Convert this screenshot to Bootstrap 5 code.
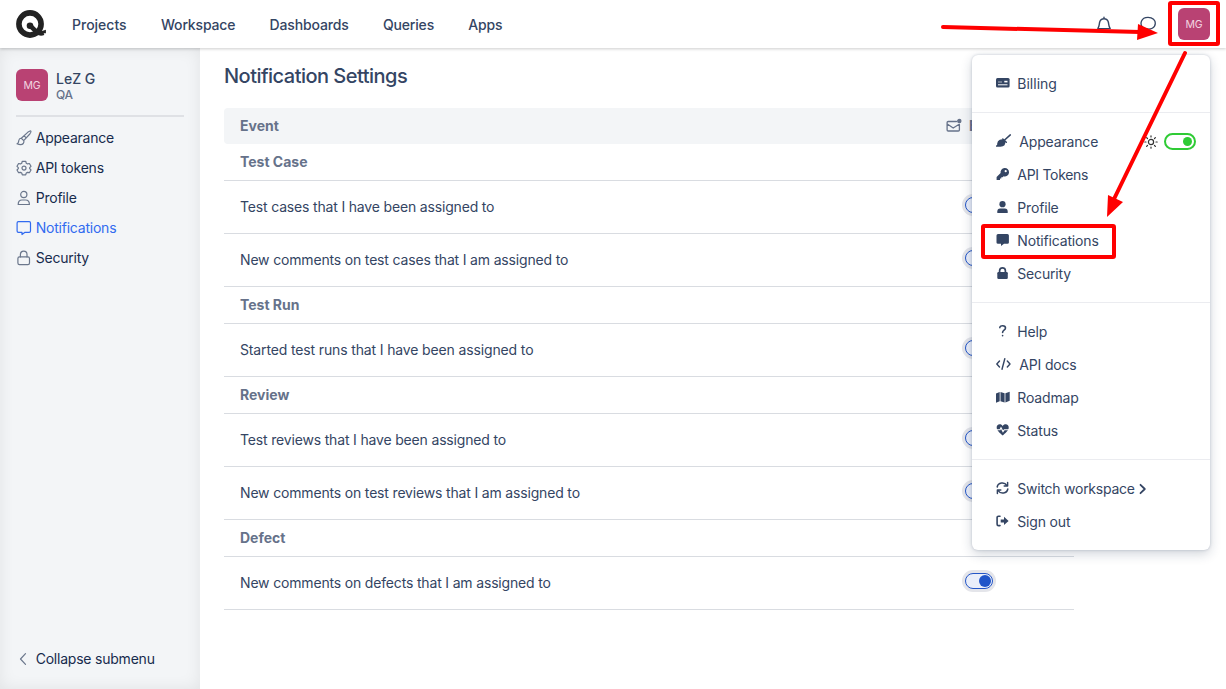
<!DOCTYPE html>
<html lang="en">
<head>
<meta charset="utf-8">
<meta name="viewport" content="width=device-width, initial-scale=1">
<title>Notification Settings</title>
<link href="https://cdn.jsdelivr.net/npm/bootstrap@5.3.0/dist/css/bootstrap.min.css" rel="stylesheet">
<style>
body{font:14px/20px Inter,"Liberation Sans",sans-serif;letter-spacing:-.17px;color:#344563;height:689px;overflow:hidden;background:#fff}
svg{display:block;flex:none;overflow:visible}
.topbar{height:48px;box-shadow:0 1px 3px rgba(0,0,0,.2);z-index:3;background:#fff;padding-left:16px;padding-right:16px}
.topbar .nav-link{color:#344563;font-weight:500;padding:1px 0 0;margin-right:34.3px;letter-spacing:-.16px}
.topbar .nav-link:first-child{letter-spacing:0}
.pic{width:32px;height:32px;border-radius:6px;background:#b94273;color:#f3d6e1;font-size:10.5px;padding-top:1px}
.side{width:200px;background:#f3f5f7;box-shadow:inset 0 0 16px rgba(0,0,0,.075);padding:21px 16px 0}
.side .who{height:32px;line-height:16px}
.side .split{height:2px;background:#dfe1e5;margin:14px 0 6px}
.side a{height:30px;color:#172b4d;text-decoration:none;letter-spacing:-.22px}
.side a svg{width:16px;height:16px;margin-right:3.7px;color:#6b778c;stroke-width:1.2}
.side a.now,.side a.now svg{color:#316bf0}
.ln{fill:none;stroke:currentColor;stroke-linecap:round;stroke-linejoin:round}
.content{padding:16px 24px}
h1{font-size:20px;line-height:24px;font-weight:500;margin:0 0 20px;letter-spacing:-.52px}
.grid{width:850px}
.rowline{border-bottom:1px solid #d9dce1;padding:0 16px;height:53px}
.rowline.group{height:37px;font-weight:700;letter-spacing:0;color:#66728a}
.rowline.head{height:36px;border:0;background:#f3f5f7;border-radius:4px;letter-spacing:0}
.tog{width:28px;height:16px;border:1px solid #2456c7;border-radius:8px;background:#e9eefa;box-shadow:0 0 0 3px #e4e5ea;margin-right:65px;margin-top:-4px;padding:0 1px}
.tog i{width:12px;height:12px;border-radius:50%;background:#2055c9}
.usermenu{position:absolute;left:972px;top:55px;width:238px;background:#fff;border-radius:6px;box-shadow:0 4px 12px rgba(23,43,77,.2),0 0 3px rgba(23,43,77,.22);z-index:4}
.usermenu section{padding:12px 14px 12px 24px;border-bottom:1px solid #ebecf0}
.usermenu section:last-child{border:0}
.usermenu .it{height:33px}
.usermenu .it>svg:first-child{width:14px;height:14px;margin:0 7.3px 2px 0}
.green{width:32px;height:17px;border:2px solid #2fcb35;border-radius:9px;padding-right:2px}
.green i{width:9px;height:9px;border-radius:50%;background:#2fcb35}
.marks{position:absolute;left:0;top:0;z-index:6}
</style>
</head>
<body class="d-flex flex-column position-relative">
<header class="topbar d-flex align-items-center position-relative flex-shrink-0">
  <svg width="29" height="30" viewBox="0 0 29 30" style="margin-right:27px"><circle cx="14" cy="15" r="11.1" fill="none" stroke="#222" stroke-width="5.6"/><circle cx="14" cy="16.7" r="3.3" fill="#222"/><path d="M14.5 17L20 22.3Q23.5 25.3 27.6 23.9V24.2" fill="none" stroke="#222" stroke-width="4.6"/></svg>
  <nav class="nav">
    <a class="nav-link" href="#">Projects</a><a class="nav-link" href="#">Workspace</a><a class="nav-link" href="#">Dashboards</a><a class="nav-link" href="#">Queries</a><a class="nav-link" href="#">Apps</a>
  </nav>
  <div class="ms-auto d-flex align-items-center">
    <svg class="ln" width="16" height="16" viewBox="0 0 16 16" style="margin-right:28px" stroke-width="1.4"><path d="M8 1.2V2.6M1.8 12.6C3.5 10.2 3 8.7 3.7 6C4.3 3.6 6 2.7 8 2.7S11.7 3.6 12.3 6C13 8.7 12.5 10.2 14.2 12.6ZM6.3 14.8Q8 16.3 9.7 14.8"/></svg>
    <svg class="ln" width="16" height="16" viewBox="0 0 16 16" style="margin-right:22px" stroke-width="1.3"><path d="M3.2 11.8C-.9 8.3 1 1.4 8 1.4C13 1.4 15.3 4.3 15.3 7.3C15.3 12 10.5 14 5.7 12.7L1.5 14Z"/></svg>
    <div class="pic d-flex align-items-center justify-content-center">MG</div>
  </div>
</header>
<div class="d-flex flex-grow-1">
  <aside class="side d-flex flex-column flex-shrink-0">
    <div class="who d-flex"><div class="pic d-flex align-items-center justify-content-center me-2">MG</div><div style="padding-top:2px"><div style="font-weight:500;letter-spacing:0">LeZ G</div><div style="font-size:12px;color:#66728a;font-weight:500">QA</div></div></div>
    <div class="split"></div>
    <a class="d-flex align-items-center" href="#"><svg class="ln" viewBox="0 0 16 16"><path d="M5.3 8.3L12 2.1Q14.5.4 14.9 1Q15.5 1.7 13.8 4L7.7 10.6M5.3 8.3Q3.2 8 2.8 10.5Q2.5 13.5 1 13.8Q5.4 15.6 7.3 13.5Q8.4 12 7.7 10.6ZM8.2 5.8L10.2 7.8"/></svg>Appearance</a>
    <a class="d-flex align-items-center" href="#"><svg class="ln" viewBox="0 0 16 16"><path d="M6.3 1.3H9.7L10.3 3.2L11.5 3.9L13.4 3.5L15 6.3L13.7 7.7V8.7L15 10L13.4 12.7L11.5 12.3L10.3 13L9.7 14.8H6.3L5.7 13L4.5 12.3L2.6 12.7L1 10L2.3 8.7V7.7L1 6.3L2.6 3.5L4.5 3.9L5.7 3.2Z"/><circle cx="8" cy="8.1" r="2"/></svg>API tokens</a>
    <a class="d-flex align-items-center" href="#"><svg class="ln" viewBox="0 0 16 16"><circle cx="7.8" cy="4.5" r="3.1"/><path d="M2.2 14.5C2.2 11.5 4 10 6 10H9.6C11.6 10 13.4 11.5 13.4 14.5Z"/></svg>Profile</a>
    <a class="now d-flex align-items-center" href="#"><svg class="ln" viewBox="0 0 16 16"><path d="M2.4 1.7H13.2Q14.5 1.7 14.5 3V11Q14.5 12.3 13.2 12.3H9L6 14.5V12.3H2.4Q1.1 12.3 1.1 11V3Q1.1 1.7 2.4 1.7Z"/></svg>Notifications</a>
    <a class="d-flex align-items-center" href="#"><svg class="ln" viewBox="0 0 16 16"><rect x="1.9" y="6.9" width="11.6" height="7.7" rx="1.6"/><path d="M4.4 6.9V4.5C4.4 0 11 0 11 4.5V6.9"/></svg>Security</a>
    <a class="d-flex align-items-center mt-auto" style="margin-bottom:15px" href="#"><svg class="ln" viewBox="0 0 16 16"><path d="M9.5 2.7L4.5 8L9.5 13.3"/></svg>Collapse submenu</a>
  </aside>
  <main class="content flex-grow-1">
    <h1>Notification Settings</h1>
    <div class="grid">
      <div class="rowline head d-flex align-items-center fw-bold" style="color:#66728a"><span>Event</span><svg class="ln ms-auto" width="16" height="14" viewBox="0 0 16 14" style="margin-right:7px" stroke-width="1.3"><path d="M10.5 2.5H2.2Q1.1 2.5 1.1 3.6V10.9Q1.1 12 2.2 12H12.3Q13.4 12 13.4 10.9V5.5M1.3 5L7.2 9L13.2 5.3"/><circle cx="13.3" cy="2" r="1.6" fill="currentColor"/></svg><span style="width:89px">Email</span></div>
      <div class="rowline group d-flex align-items-center">Test Case</div>
      <div class="rowline d-flex align-items-center justify-content-between">Test cases that I have been assigned to<span class="tog d-flex align-items-center justify-content-end"><i></i></span></div>
      <div class="rowline d-flex align-items-center justify-content-between">New comments on test cases that I am assigned to<span class="tog d-flex align-items-center justify-content-end"><i></i></span></div>
      <div class="rowline group d-flex align-items-center">Test Run</div>
      <div class="rowline d-flex align-items-center justify-content-between" style="letter-spacing:-.14px">Started test runs that I have been assigned to<span class="tog d-flex align-items-center justify-content-end"><i></i></span></div>
      <div class="rowline group d-flex align-items-center">Review</div>
      <div class="rowline d-flex align-items-center justify-content-between">Test reviews that I have been assigned to<span class="tog d-flex align-items-center justify-content-end"><i></i></span></div>
      <div class="rowline d-flex align-items-center justify-content-between">New comments on test reviews that I am assigned to<span class="tog d-flex align-items-center justify-content-end"><i></i></span></div>
      <div class="rowline group d-flex align-items-center">Defect</div>
      <div class="rowline d-flex align-items-center justify-content-between">New comments on defects that I am assigned to<span class="tog d-flex align-items-center justify-content-end"><i></i></span></div>
    </div>
  </main>
</div>

<div class="usermenu">
  <section>
    <div class="it d-flex align-items-center"><svg viewBox="0 0 14 14"><rect y="2" width="13.6" height="9.6" rx="1.5" fill="currentColor"/><path d="M2 8.8H11.5" stroke="#fff"/><path d="M2 6H6" stroke="#fff" stroke-width=".6"/><path d="M8.3 5.6H11.5" stroke="#fff" stroke-width="1.6"/></svg><span style="letter-spacing:0">Billing</span></div>
  </section>
  <section>
    <div class="it d-flex align-items-center"><svg viewBox="0 0 14 14"><path d="M3.8 5.8Q7.5 4 9.3 7Q10.2 12.6 4.4 12.8H0V11.5Q1.6 11.6 1.2 9.6Q1.4 6.8 3.8 5.8Z" fill="currentColor"/><path d="M7.5 7L14.3.9M6.8 5L10.3 8.2" stroke="currentColor" stroke-width="1.5" stroke-linecap="round"/></svg><span style="margin-left:2px">Appearance</span>
      <svg class="ms-auto" width="14" height="14" viewBox="0 0 14 14" fill="none" stroke="#333" stroke-width="1.2" stroke-linecap="round" style="margin-right:6px"><circle cx="7" cy="7" r="2.6"/><path d="M7 .8V2M7 12V13.2M.8 7H2M12 7H13.2M2.6 2.6L3.5 3.5M10.5 10.5L11.4 11.4M2.6 11.4L3.5 10.5M10.5 3.5L11.4 2.6"/></svg>
      <span class="green d-flex align-items-center justify-content-end"><i></i></span></div>
    <div class="it d-flex align-items-center" style="letter-spacing:-.3px"><svg viewBox="0 0 14 14"><path fill="currentColor" fill-rule="evenodd" d="M8.5 1A4.2 4.2 0 1 1 7.6 9.2L6.6 10.2H5.3V11.5H4V13H.6V10L4.6 6.1A4.2 4.2 0 0 1 8.5 1ZM9.7 3.1A1.1 1.1 0 1 0 9.7 5.3 1.1 1.1 0 0 0 9.7 3.1Z"/></svg>API Tokens</div>
    <div class="it d-flex align-items-center"><svg viewBox="0 0 14 14" fill="currentColor"><circle cx="6.5" cy="4.2" r="3.1"/><path d="M1.3 13V11.4Q1.3 8.5 4.2 8.5H8.8Q11.7 8.5 11.7 11.4V13Z"/></svg>Profile</div>
    <div class="it d-flex align-items-center"><svg viewBox="0 0 14 14"><path fill="currentColor" d="M2 1H11.4Q12.9 1 12.9 2.5V9.4Q12.9 10.8 11.4 10.8H8L5 12.9V10.8H2Q.5 10.8.5 9.4V2.5Q.5 1 2 1Z"/></svg>Notifications</div>
    <div class="it d-flex align-items-center"><svg viewBox="0 0 14 14"><rect x="1.3" y="6" width="10.5" height="7" rx="1.2" fill="currentColor"/><path d="M3.6 6.5V4.7C3.6.8 9.4.8 9.4 4.7V6.5" fill="none" stroke="currentColor" stroke-width="1.7"/></svg>Security</div>
  </section>
  <section>
    <div class="it d-flex align-items-center"><svg class="ln" viewBox="0 0 14 14" stroke-width="1.6"><path d="M3.8 3.6C3.9 1 9.5 1.1 9.5 4C9.5 6.2 6.6 6.2 6.6 8.4M6.6 11.6V11.7"/></svg>Help</div>
    <div class="it d-flex align-items-center"><svg class="ln" viewBox="0 0 14 14" stroke-width="1.4"><path d="M3.5 4L.8 7L3.5 10M11.3 4L14 7L11.3 10M8.8 1.8L6 12.2"/></svg><span style="margin-left:2px">API docs</span></div>
    <div class="it d-flex align-items-center"><svg viewBox="0 0 14 14" fill="currentColor"><path d="M0 3.6L3.7 2V11.2L0 12.7ZM4.5 2L8.6 3.3V12.5L4.5 11.3ZM9.4 3.3L13.7 1.8V10.8L9.4 12.5Z"/></svg>Roadmap</div>
    <div class="it d-flex align-items-center"><svg viewBox="0 0 14 14"><path fill="currentColor" d="M6.7 3.2C8-.1 13.4.8 12.7 5C12.4 7.8 9 10.4 6.7 12.5C4.4 10.4 1 7.8.7 5C0 .8 5.4-.1 6.7 3.2Z"/><path d="M.3 6.8H4L5 4.8L7 8.6L8.3 6.8H13" fill="none" stroke="#fff" stroke-width="1.1"/></svg>Status</div>
  </section>
  <section>
    <div class="it d-flex align-items-center" style="letter-spacing:-.25px"><svg class="ln" viewBox="0 0 14 14" stroke-width="1.5"><path d="M1.2 6C2 1.4 8.5.5 10.8 4.5M11.6 1.5V5H8.2M11.8 8C11 12.6 4.5 13.5 2.2 9.5M1.4 12.5V9H4.8"/></svg>Switch workspace<svg class="ln" width="7" height="12" viewBox="0 0 7 12" style="margin-left:4px" stroke-width="1.8"><path d="M1.5 1.8L5.8 6L1.5 10.2"/></svg></div>
    <div class="it d-flex align-items-center"><svg viewBox="0 0 14 14"><path class="ln" stroke-width="1.6" d="M4 2.2H2.5Q1.1 2.2 1.1 3.6V10.2Q1.1 11.6 2.5 11.6H4"/><path fill="currentColor" d="M4.7 5.4H8V2.8L12.6 6.9L8 11V8.4H4.7Z"/></svg>Sign out</div>
  </section>
</div>

<svg class="marks" width="1226" height="300" viewBox="0 0 1226 300" fill="none" stroke="#f00" stroke-width="4">
  <rect x="1170" y="3" width="48" height="41" rx="1"/>
  <rect x="983" y="226" width="131" height="31" rx="1"/>
  <path d="M943 27L1140 32M1185 53L1114 199" stroke-linecap="round"/>
  <path d="M1138 24L1158 33L1137 40ZM1108 195L1123 202L1107 217Z" fill="#f00" stroke="none"/>
</svg>
<script src="https://cdn.jsdelivr.net/npm/bootstrap@5.3.0/dist/js/bootstrap.bundle.min.js"></script>
</body>
</html>
